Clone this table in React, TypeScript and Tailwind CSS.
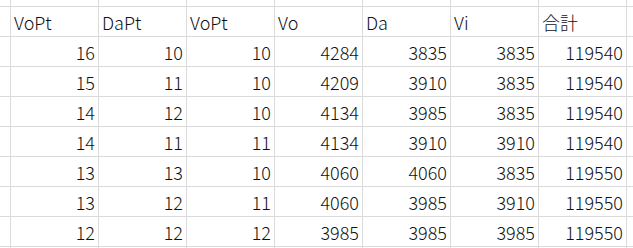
import React from "react";

const headers = ["VoPt", "DaPt", "VoPt", "Vo", "Da", "Vi", "合計"];
const rows: number[][] = [
  [16, 10, 10, 4284, 3835, 3835, 119540],
  [15, 11, 10, 4209, 3910, 3835, 119540],
  [14, 12, 10, 4134, 3985, 3835, 119540],
  [14, 11, 11, 4134, 3910, 3910, 119540],
  [13, 13, 10, 4060, 4060, 3835, 119550],
  [13, 12, 11, 4060, 3985, 3910, 119550],
  [12, 12, 12, 3985, 3985, 3985, 119550],
];

export default function App() {
  const font = { fontFamily: '"Noto Sans CJK JP", "Noto Sans", sans-serif' };
  const edge = "border-l border-[#dadada]";
  return (
    <div className="w-[633px] h-[248px] overflow-hidden bg-white text-[#111]" style={font}>
      <div className="grid grid-cols-[10px_repeat(7,88px)_1fr] grid-rows-[6px_repeat(8,30px)_2px] font-light">
        <div />
        {headers.map((_, i) => (
          <div key={"t" + i} className={edge} />
        ))}
        <div className={edge} />
        <div className="border-t border-[#dadada]" />
        {headers.map((h, i) => (
          <div
            key={"h" + i}
            className={`${edge} border-t flex items-center pl-[3px] pt-[1px] text-[18px] leading-none`}
          >
            {h}
          </div>
        ))}
        <div className={`${edge} border-t`} />
        {rows.map((r, ri) => (
          <React.Fragment key={ri}>
            <div className="border-t border-[#dadada]" />
            {r.map((v, ci) => (
              <div
                key={ci}
                className={`${edge} border-t flex items-center justify-end pr-[3px] pt-[1px] text-[18px] leading-none`}
              >
                {v}
              </div>
            ))}
            <div className={`${edge} border-t`} />
          </React.Fragment>
        ))}
        <div className="border-t border-[#dadada]" />
        {headers.map((_, i) => (
          <div key={"b" + i} className={`${edge} border-t`} />
        ))}
        <div className={`${edge} border-t`} />
      </div>
    </div>
  );
}
